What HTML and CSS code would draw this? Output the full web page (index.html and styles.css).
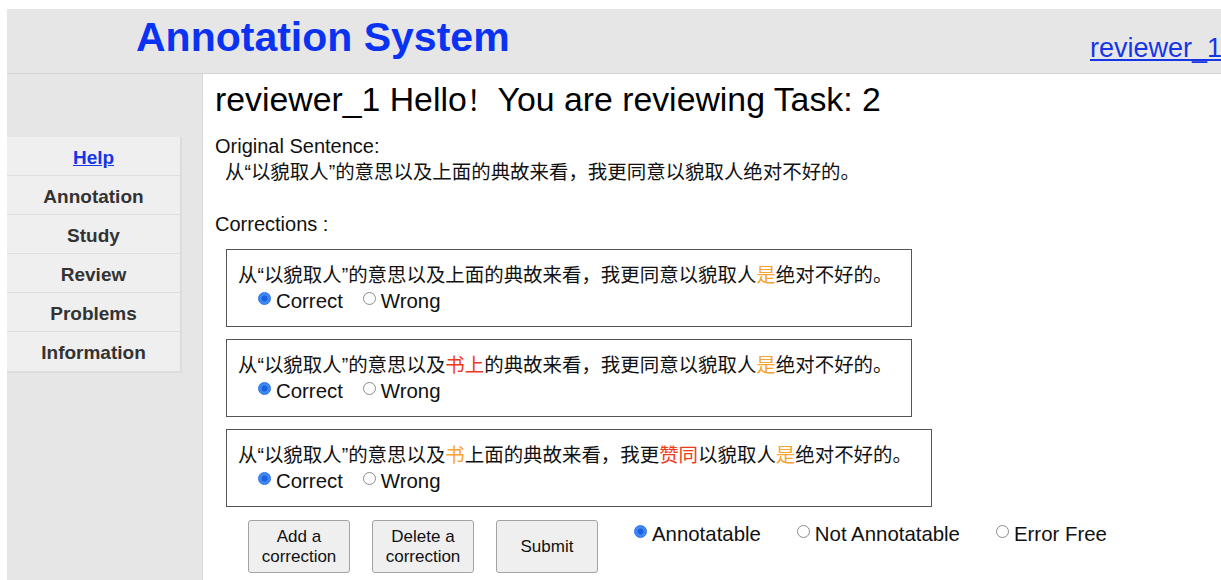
FILE: index.html
```html
<!DOCTYPE html>
<html lang="en">
<head>
<meta charset="utf-8">
<title>Annotation System</title>
<link rel="stylesheet" href="styles.css">
</head>
<body>
  <header class="topbar">
    <h1 class="brand">Annotation System</h1>
    <a class="user-link" href="#">reviewer_1</a>
  </header>

  <div class="layout">
    <aside class="sidebar">
      <ul class="menu">
        <li class="menu-item"><a class="menu-link is-link" href="#">Help</a></li>
        <li class="menu-item"><span class="menu-link">Annotation</span></li>
        <li class="menu-item"><span class="menu-link">Study</span></li>
        <li class="menu-item"><span class="menu-link">Review</span></li>
        <li class="menu-item"><span class="menu-link">Problems</span></li>
        <li class="menu-item"><span class="menu-link">Information</span></li>
      </ul>
    </aside>

    <main class="content">
      <h2 class="page-title">reviewer_1 Hello<span class="bang">！</span> You are reviewing Task: 2</h2>

      <p class="label">Original Sentence:</p>
      <p class="sentence original">从“以貌取人”的意思以及上面的典故来看，我更同意以貌取人绝对不好的。</p>

      <p class="label corrections-label">Corrections :</p>

      <div class="corrections">
        <div class="correction">
          <p class="sentence">从“以貌取人”的意思以及上面的典故来看，我更同意以貌取人<span class="ins">是</span>绝对不好的。</p>
          <div class="verdict">
            <label class="choice"><input type="radio" name="c1" checked><span>Correct</span></label>
            <label class="choice"><input type="radio" name="c1"><span>Wrong</span></label>
          </div>
        </div>

        <div class="correction">
          <p class="sentence">从“以貌取人”的意思以及<span class="sub">书上</span>的典故来看，我更同意以貌取人<span class="ins">是</span>绝对不好的。</p>
          <div class="verdict">
            <label class="choice"><input type="radio" name="c2" checked><span>Correct</span></label>
            <label class="choice"><input type="radio" name="c2"><span>Wrong</span></label>
          </div>
        </div>

        <div class="correction">
          <p class="sentence">从“以貌取人”的意思以及<span class="ins">书</span>上面的典故来看，我更<span class="sub">赞同</span>以貌取人<span class="ins">是</span>绝对不好的。</p>
          <div class="verdict">
            <label class="choice"><input type="radio" name="c3" checked><span>Correct</span></label>
            <label class="choice"><input type="radio" name="c3"><span>Wrong</span></label>
          </div>
        </div>
      </div>

      <div class="actions">
        <div class="buttons">
          <button class="btn" type="button">Add a<br>correction</button>
          <button class="btn" type="button">Delete a<br>correction</button>
          <button class="btn" type="button">Submit</button>
        </div>
        <div class="status">
          <label class="choice status-choice"><input type="radio" name="status" checked><span>Annotatable</span></label>
          <label class="choice status-choice"><input type="radio" name="status"><span>Not Annotatable</span></label>
          <label class="choice status-choice"><input type="radio" name="status"><span>Error Free</span></label>
        </div>
      </div>
    </main>
  </div>
</body>
</html>
```

FILE: styles.css
```css
html {
  overflow: hidden;
}

body {
  margin: 9px 0 0 7px;
  font-family: "Liberation Sans", Arial, "Noto Sans CJK SC", sans-serif;
  color: #111;
  background: #fff;
}

/* top bar */
.topbar {
  display: flex;
  align-items: flex-start;
  height: 64px;
  background: #e6e6e6;
  border-bottom: 1px solid #d3d3d3;
  overflow: hidden;
}

.brand {
  flex: 0 0 954px;
  margin: 0 0 0 129px;
  padding-top: 8px;
  font-size: 41px;
  line-height: 41px;
  font-weight: bold;
  color: #0a32f2;
}

.user-link {
  flex: 0 0 auto;
  padding-top: 26px;
  font-size: 27px;
  line-height: 27px;
  color: #1636e6;
  white-space: nowrap;
}

/* page body */
.layout {
  display: flex;
  min-height: 520px;
}

.sidebar {
  flex: 0 0 195px;
  background: #e6e6e6;
  border-right: 1px solid #d6d6d6;
}

.menu {
  list-style: none;
  margin: 63px 0 0;
  padding: 0;
  width: 173px;
  background: #efefef;
  border-right: 2px solid #dcdcdc;
  border-bottom: 2px solid #dcdcdc;
}

.menu-item {
  display: flex;
  align-items: center;
  justify-content: center;
  box-sizing: border-box;
  height: 39px;
  padding-top: 3px;
  border-bottom: 1px solid #dedede;
}

.menu-item:last-child {
  border-bottom: none;
}

.menu-link {
  font-size: 19px;
  font-weight: bold;
  color: #333;
}

.menu-link.is-link {
  color: #1636e6;
  text-decoration: underline;
}

.content {
  flex: 1 1 auto;
  padding: 6px 0 0 12px;
}

.page-title {
  margin: 0;
  font-size: 33.8px;
  line-height: 38px;
  font-weight: normal;
  color: #000;
}

/* full-width exclamation mark, kept from growing the line box */
.bang {
  font-size: 28px;
  line-height: 0;
  letter-spacing: -6px;
}

.label {
  margin: 15px 0 0;
  font-size: 20px;
  line-height: 26px;
}

.sentence {
  margin: 0;
  font-size: 19.45px;
  line-height: 26px;
  white-space: nowrap;
}

.sentence.original {
  padding-left: 10px;
}

.corrections-label {
  margin-top: 26px;
}

/* correction cards */
.corrections {
  display: flex;
  flex-direction: column;
  align-items: flex-start;
  gap: 12px;
  margin: 12px 0 0 11px;
}

.correction {
  padding: 12px 19px 12px 11px;
  border: 1px solid #555;
}

.verdict {
  display: flex;
  gap: 20px;
  padding-left: 20px;
  font-size: 20.4px;
  line-height: 26px;
}

.ins {
  color: #f6a330;
}

.sub {
  color: #ef3a1a;
}

/* radio choices */
.choice {
  display: inline-flex;
  align-items: flex-start;
  gap: 5px;
  white-space: nowrap;
}

.choice input {
  appearance: none;
  flex: 0 0 auto;
  width: 13px;
  height: 13px;
  margin: 4px 0 0;
  border: 1px solid #8c8c8c;
  border-radius: 50%;
  background: #fff;
}

.choice input:checked {
  border-color: #2a6ee6;
  background: radial-gradient(circle, #1d5fdc 0 2.5px, #3b8af8 3.5px);
}

/* bottom actions */
.actions {
  display: flex;
  align-items: flex-start;
  gap: 36px;
  margin: 13px 0 0 33px;
}

.buttons {
  display: flex;
  gap: 22px;
}

.btn {
  width: 102px;
  height: 53px;
  padding: 0;
  font-family: "Liberation Sans", Arial, sans-serif;
  font-size: 17px;
  line-height: 20px;
  color: #111;
  background: #efefef;
  border: 1px solid #a3a3a3;
  border-radius: 3px;
}

.status {
  display: flex;
  gap: 36px;
  padding-top: 1px;
  font-size: 20.4px;
  line-height: 26px;
}
```
